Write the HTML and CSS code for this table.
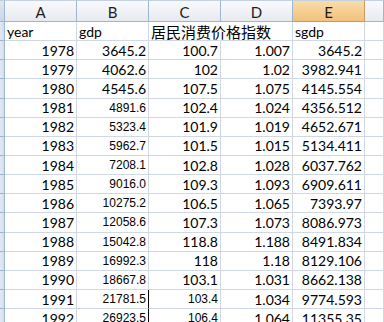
FILE: index.html
```html
<!DOCTYPE html>
<html>
<head>
<meta charset="utf-8">
<link rel="stylesheet" href="styles.css">
</head>
<body>
<div class="sheet">
  <div class="ch corner"></div><div class="ch">A</div><div class="ch">B</div><div class="ch">C</div><div class="ch">D</div><div class="ch sel">E</div><div class="ch last"></div>

  <div class="rh"></div><div class="c t">year</div><div class="c t">gdp</div><div class="c t cn">居民消费价格指数</div><div class="c"></div><div class="c t">sgdp</div><div class="c"></div>

  <div class="rh"></div><div class="c n">1978</div><div class="c n">3645.2</div><div class="c n">100.7</div><div class="c n">1.007</div><div class="c n">3645.2</div><div class="c"></div>
  <div class="rh"></div><div class="c n">1979</div><div class="c n">4062.6</div><div class="c n">102</div><div class="c n">1.02</div><div class="c n">3982.941</div><div class="c"></div>
  <div class="rh"></div><div class="c n">1980</div><div class="c n">4545.6</div><div class="c n">107.5</div><div class="c n">1.075</div><div class="c n">4145.554</div><div class="c"></div>
  <div class="rh"></div><div class="c n">1981</div><div class="c n s">4891.6</div><div class="c n">102.4</div><div class="c n">1.024</div><div class="c n">4356.512</div><div class="c"></div>
  <div class="rh"></div><div class="c n">1982</div><div class="c n s">5323.4</div><div class="c n">101.9</div><div class="c n">1.019</div><div class="c n">4652.671</div><div class="c"></div>
  <div class="rh"></div><div class="c n">1983</div><div class="c n s">5962.7</div><div class="c n">101.5</div><div class="c n">1.015</div><div class="c n">5134.411</div><div class="c"></div>
  <div class="rh"></div><div class="c n">1984</div><div class="c n s">7208.1</div><div class="c n">102.8</div><div class="c n">1.028</div><div class="c n">6037.762</div><div class="c"></div>
  <div class="rh"></div><div class="c n">1985</div><div class="c n s">9016.0</div><div class="c n">109.3</div><div class="c n">1.093</div><div class="c n">6909.611</div><div class="c"></div>
  <div class="rh"></div><div class="c n">1986</div><div class="c n s">10275.2</div><div class="c n">106.5</div><div class="c n">1.065</div><div class="c n">7393.97</div><div class="c"></div>
  <div class="rh"></div><div class="c n">1987</div><div class="c n s">12058.6</div><div class="c n">107.3</div><div class="c n">1.073</div><div class="c n">8086.973</div><div class="c"></div>
  <div class="rh"></div><div class="c n">1988</div><div class="c n s">15042.8</div><div class="c n">118.8</div><div class="c n">1.188</div><div class="c n">8491.834</div><div class="c"></div>
  <div class="rh"></div><div class="c n">1989</div><div class="c n s">16992.3</div><div class="c n">118</div><div class="c n">1.18</div><div class="c n">8129.106</div><div class="c"></div>
  <div class="rh"></div><div class="c n">1990</div><div class="c n s">18667.8</div><div class="c n">103.1</div><div class="c n">1.031</div><div class="c n">8662.138</div><div class="c"></div>
  <div class="rh"></div><div class="c n">1991</div><div class="c n s blk">21781.5</div><div class="c n s">103.4</div><div class="c n">1.034</div><div class="c n">9774.593</div><div class="c"></div>
  <div class="rh"></div><div class="c n">1992</div><div class="c n s blk">26923.5</div><div class="c n s">106.4</div><div class="c n">1.064</div><div class="c n">11355.35</div><div class="c"></div>
</div>
</body>
</html>
```

FILE: styles.css
```css
html, body {
  margin: 0;
  padding: 0;
  background: #fff;
  overflow: hidden;
}
.sheet {
  display: grid;
  grid-template-columns: 5px 72px 72px 72px 72px 72px 1fr;
  grid-template-rows: 22px;
  grid-auto-rows: 19.15px;
  width: 384px;
  font-family: Lato, "Noto Sans", sans-serif;
  font-size: 14px;
  color: #000;
}
.ch {
  box-sizing: border-box;
  border-top: 1px solid #c5d1de;
  border-right: 1px solid #9eb6ce;
  border-bottom: 1px solid #9eb6ce;
  background: linear-gradient(#f9fafc, #e6eaf0);
  display: flex;
  align-items: center;
  justify-content: center;
  font-size: 15px;
  color: #1d1d1d;
  padding-top: 1px;
}
.ch.corner {
  background: linear-gradient(#dfe7f1, #c9d7e8);
}
.ch.sel {
  background: linear-gradient(#f9dcab, #f1c27a);
  border-right-color: #c29b62;
  border-bottom-color: #c29b62;
}
.rh {
  box-sizing: border-box;
  border-right: 1px solid #9eb6ce;
  border-bottom: 1px solid #9eb6ce;
  background: linear-gradient(90deg, #e2e9f3, #d3deec);
}
.c {
  box-sizing: border-box;
  border-right: 1px solid #d0d7e5;
  border-bottom: 1px solid #d0d7e5;
  display: flex;
  align-items: center;
  white-space: nowrap;
  overflow: visible;
  min-width: 0;
}
.c.t {
  justify-content: flex-start;
  padding-left: 2px;
}
.c.n {
  justify-content: flex-end;
  padding-right: 2px;
}
.c.cn {
  font-family: "Noto Sans CJK SC", sans-serif;
  font-size: 15px;
  border-right-color: transparent;
  position: relative;
  z-index: 1;
}
.c.s {
  font-family: "Liberation Sans", Arial, sans-serif;
  font-size: 12px;
}
.c.blk {
  border-right: 1px solid #000;
}
```
